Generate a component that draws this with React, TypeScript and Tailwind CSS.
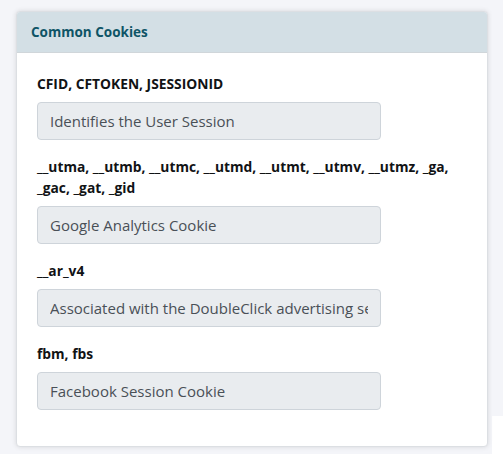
import React from "react";

const groups: { label: string; value: string }[] = [
  { label: "CFID, CFTOKEN, JSESSIONID", value: "Identifies the User Session" },
  {
    label: "__utma, __utmb, __utmc, __utmd, __utmt, __utmv, __utmz, _ga, _gac, _gat, _gid",
    value: "Google Analytics Cookie",
  },
  { label: "__ar_v4", value: "Associated with the DoubleClick advertising service" },
  { label: "fbm, fbs", value: "Facebook Session Cookie" },
];

export default function App() {
  return (
    <div className="flex h-[454px] w-[503px] bg-white" style={{ fontFamily: '"Open Sans", "Noto Sans", sans-serif' }}>
      <div className="w-[492px] bg-[#f4f5f9] pt-[11px] pl-[16px] pr-[4px]">
        <div className="rounded-[4px] border border-[#dcdfe3] bg-white shadow-[0_0_5px_rgba(0,0,0,0.12)] overflow-hidden">
          <div className="h-[41px] bg-[#d3dfe5] border-b border-[#d0d6da] pl-[14px] flex items-center">
            <span className="text-[13.5px] font-bold text-[#0e5466]">Common Cookies</span>
          </div>
          <div className="px-[20px] pt-[20px] pb-[20px]">
            {groups.map((g) => (
              <div key={g.label} className="mb-[16px]">
                <div className="text-[13.8px] leading-[21px] font-bold text-[#111315] mb-[8px]">{g.label}</div>
                <input
                  readOnly
                  value={g.value}
                  className="block w-[344px] h-[38px] rounded-[4px] border border-[#ced4da] bg-[#e9ecef] px-[12px] text-[15px] text-[#495057] outline-none"
                />
              </div>
            ))}
          </div>
        </div>
      </div>
      <div className="w-[11px] flex flex-col">
        <div className="h-[416px] bg-[#f4f5f9]" />
      </div>
    </div>
  );
}
